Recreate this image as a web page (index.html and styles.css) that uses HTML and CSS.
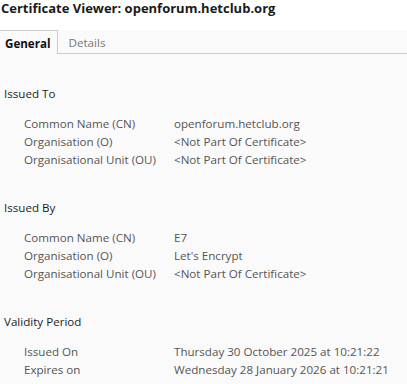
FILE: index.html
```html
<!DOCTYPE html>
<html lang="en">
  <head>
    <meta charset="UTF-8" />
    <title>Certificate Viewer</title>
    <link rel="stylesheet" href="styles.css">
  </head>
  <body>
    <div class="viewer">
      <h1 class="title">Certificate Viewer: openforum.hetclub.org</h1>

      <div class="tabs">
        <div class="tab active">General</div>
        <div class="tab">Details</div>
        <div class="tab-fill"></div>
      </div>

      <div class="section">
        <div class="section-title">Issued To</div>
        <div class="rows">
          <div class="label">Common Name (CN)</div>
          <div class="value">openforum.hetclub.org</div>
          <div class="label">Organisation (O)</div>
          <div class="value">&lt;Not Part Of Certificate&gt;</div>
          <div class="label">Organisational Unit (OU)</div>
          <div class="value">&lt;Not Part Of Certificate&gt;</div>
        </div>
      </div>

      <div class="section">
        <div class="section-title">Issued By</div>
        <div class="rows">
          <div class="label">Common Name (CN)</div>
          <div class="value">E7</div>
          <div class="label">Organisation (O)</div>
          <div class="value">Let's Encrypt</div>
          <div class="label">Organisational Unit (OU)</div>
          <div class="value">&lt;Not Part Of Certificate&gt;</div>
        </div>
      </div>

      <div class="section">
        <div class="section-title">Validity Period</div>
        <div class="rows">
          <div class="label">Issued On</div>
          <div class="value">Thursday 30 October 2025 at 10:21:22</div>
          <div class="label">Expires on</div>
          <div class="value">Wednesday 28 January 2026 at 10:21:21</div>
        </div>
      </div>
    </div>
  </body>
</html>
```

FILE: styles.css
```css
body {
  margin: 0;
  background-color: #fafafa;
  font-family: "Open Sans", "Noto Sans", Arial, sans-serif;
  color: #222;
}

.viewer {
  width: 407px;
}

.title {
  margin: 0;
  padding: 0 0 0 1px;
  height: 30px;
  font-size: 13px;
  font-weight: bold;
  line-height: 17px;
  background-color: #fff;
  color: #1a1a1a;
}

.tabs {
  display: flex;
  height: 24px;
  margin-bottom: 1px;
}

.tab {
  padding: 0 10px 0 11px;
  font-size: 11.6px;
  line-height: 25px;
  color: #777;
  border-bottom: 1px solid #ccc;
}

.tab.active {
  font-weight: bold;
  color: #111;
  border: 1px solid #ccc;
  border-left: none;
  border-bottom: none;
  padding: 0 6px 0 5px;
}

.tab-fill {
  flex: 1;
  border-bottom: 1px solid #ccc;
}

.section {
  padding-top: 30px;
}

.section-title {
  padding-left: 4px;
  font-size: 11.6px;
  line-height: 18px;
  color: #1e1e1e;
}

.rows {
  display: grid;
  grid-template-columns: 150px 1fr;
  padding: 12px 0 0 24px;
  font-size: 11.6px;
  line-height: 18px;
  color: #555;
}
```
